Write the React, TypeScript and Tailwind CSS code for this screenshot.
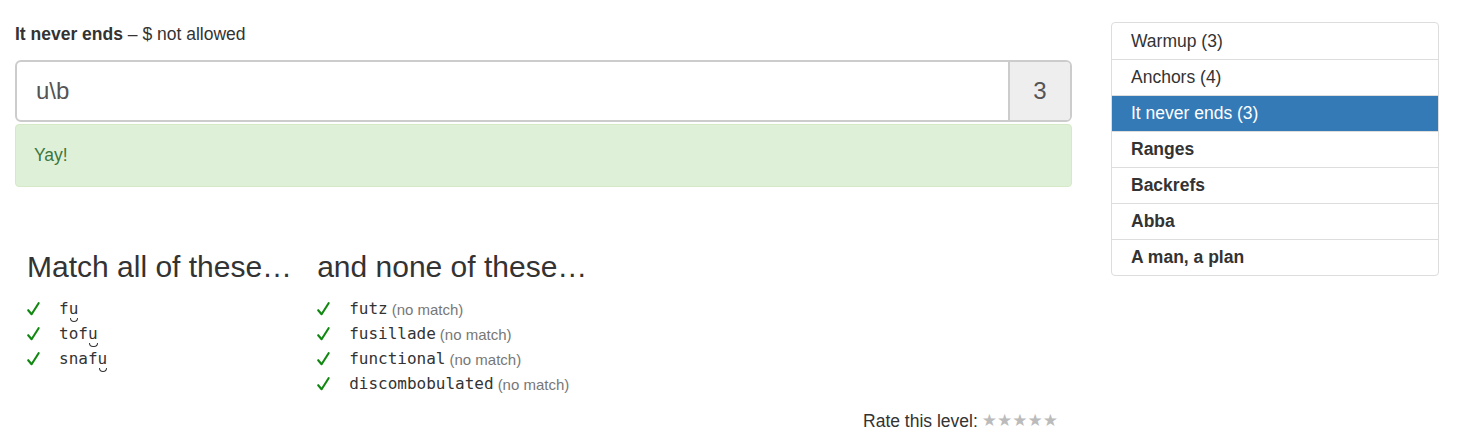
import React from "react";

const sans = { fontFamily: '"Liberation Sans", Arial, sans-serif' };

function Hit({ pre, hit }: { pre: string; hit: string }) {
  return (
    <span>
      {pre}
      <span className="relative inline-block leading-[16px]">
        {hit}
        <span className="absolute left-[1px] right-[0px] bottom-[-5px] h-[4px] border-b border-l border-r border-[#333] rounded-b-full" />
      </span>
    </span>
  );
}

function Check() {
  return (
    <span className="inline-flex w-[32px] items-center">
      <svg width="13" height="14" viewBox="0 0 13 14" className="mt-[-1px]">
        <path d="M1.2 8.2 L4.6 12.2 L11.6 1.2" fill="none" stroke="#118811" strokeWidth="2.1" strokeLinecap="round" strokeLinejoin="round" />
      </svg>
    </span>
  );
}

export default function App() {
  const matches = [
    ["f", "u"],
    ["tof", "u"],
    ["snaf", "u"],
  ];
  const nones = ["futz", "fusillade", "functional", "discombobulated"];
  const levels: { name: string; active?: boolean; bold?: boolean }[] = [
    { name: "Warmup (3)" },
    { name: "Anchors (4)" },
    { name: "It never ends (3)", active: true },
    { name: "Ranges", bold: true },
    { name: "Backrefs", bold: true },
    { name: "Abba", bold: true },
    { name: "A man, a plan", bold: true },
  ];
  return (
    <div className="w-[1469px] h-[428px] overflow-hidden bg-white text-[#333] text-[17.5px] leading-[1.4]" style={sans}>
      <div className="flex">
        <div className="w-[1057px] ml-[15px] mr-[39px] pt-[22px]">
          <div className="h-[24px] flex items-center">
            <span>
              <b>It never ends</b> – $ not allowed
            </span>
          </div>
          <div className="mt-[14px] flex h-[62px] border-2 border-[#ccc] rounded-[6px] overflow-hidden">
            <div className="flex-1 flex items-center pl-[19px] text-[24px] text-[#555]">u\b</div>
            <div className="w-[62px] border-l-2 border-[#ccc] bg-[#eee] flex items-center justify-center text-[24px] text-[#555]">
              3
            </div>
          </div>
          <div className="mt-[2px] h-[63px] bg-[#dff0d8] border border-[#d6e9c6] rounded-[4px] text-[#3c763d] flex items-center pl-[18px]">
            Yay!
          </div>
          <div className="mt-[63px] flex pl-[12px]">
            <div className="mr-[25px]">
              <div className="text-[30px] leading-[33px]">Match all of these…</div>
              <div className="mt-[14px]">
                {matches.map(([p, h]) => (
                  <div key={p + h} className="flex items-center h-[25px]">
                    <Check />
                    <span className="font-['DejaVu_Sans_Mono',monospace] text-[16px] text-[#333]">
                      <Hit pre={p} hit={h} />
                    </span>
                  </div>
                ))}
              </div>
            </div>
            <div>
              <div className="text-[30px] leading-[33px]">and none of these…</div>
              <div className="mt-[14px]">
                {nones.map((n) => (
                  <div key={n} className="flex items-center h-[25px]">
                    <Check />
                    <span className="font-['DejaVu_Sans_Mono',monospace] text-[16px] text-[#333]">{n}</span>
                    <span className="ml-[4px] text-[15px] text-[#777]">(no match)</span>
                  </div>
                ))}
              </div>
            </div>
          </div>
          <div className="flex justify-end pr-[14px] mt-[12px] h-[24px] items-center">
            <span>Rate this level:</span>
            <span className="ml-[4px] text-[#bbb] text-[17px] font-['DejaVu_Sans',sans-serif]">★★★★★</span>
          </div>
        </div>
        <div className="w-[328px] mt-[22px]">
          <div className="border border-[#ddd] rounded-[4px] overflow-hidden">
            {levels.map((l, i) => (
              <div
                key={l.name}
                className={
                  (i > 0 ? "border-t border-[#ddd] " : "") +
                  (l.active ? "bg-[#337ab7] text-white " : "") +
                  (l.bold ? "font-bold " : "") +
                  "h-[36px] flex items-center pl-[19px]"
                }
              >
                {l.name}
              </div>
            ))}
          </div>
        </div>
      </div>
    </div>
  );
}
